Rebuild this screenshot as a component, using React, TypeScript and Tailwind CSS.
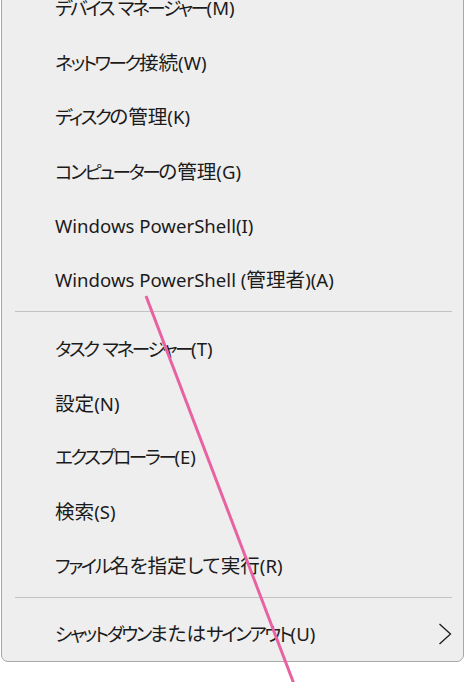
import React from 'react';

const groupA = [
  'デバイス マネージャー(M)',
  'ネットワーク接続(W)',
  'ディスクの管理(K)',
  'コンピューターの管理(G)',
  'Windows PowerShell(I)',
  'Windows PowerShell (管理者)(A)',
];

const groupB = [
  'タスク マネージャー(T)',
  '設定(N)',
  'エクスプローラー(E)',
  '検索(S)',
  'ファイル名を指定して実行(R)',
];

const font = { fontFamily: '"Noto Sans", "Noto Sans CJK JP", sans-serif' };

// katakana is set tighter and kanji a touch larger, like Yu Gothic UI
const Label: React.FC<{ text: string }> = ({ text }) => {
  const parts = text.split(/([\u30a0-\u30ff]+|[\x20-\x7e]+)/).filter(Boolean);
  return (
    <span className="[font-feature-settings:'palt']">
      {parts.map((p, i) => {
        if (/^[\u30a0-\u30ff]+$/.test(p)) {
          return <span key={i} className="tracking-[-2.4px]">{p}</span>;
        }
        if (/^[\x20-\x7e]+$/.test(p)) {
          return <span key={i}>{p}</span>;
        }
        return <span key={i} className="text-[19.6px]">{p}</span>;
      })}
    </span>
  );
};

const App: React.FC = () => {
  return (
    <div className="relative w-[466px] h-[682px] overflow-hidden bg-white" style={font}>
      <div className="ml-[1px] w-[463px] -mt-[20px] bg-[#eeeeee] border border-[#a8a8a8] rounded-b-[7px] text-[18.6px] text-[#1b1b1b]">
        {groupA.map(label => (
          <div key={label} className="h-[54.4px] flex items-center pl-[53px]">
            <Label text={label} />
          </div>
        ))}

        <div className="mt-[4px] mb-[10px] ml-[13px] mr-[11px] h-px bg-[#c2c2c2]" />

        {groupB.map(label => (
          <div key={label} className="h-[54px] flex items-center pl-[53px]">
            <Label text={label} />
          </div>
        ))}

        <div className="mt-[5px] mb-[8px] ml-[13px] mr-[11px] h-px bg-[#c2c2c2]" />

        <div className="h-[55px] flex items-center justify-between pl-[53px] pr-[11px]">
          <Label text="シャットダウンまたはサインアウト(U)" />
          <svg width="14" height="22" viewBox="0 0 14 22" fill="none">
            <polyline points="1.5,1 12.5,11 1.5,21" stroke="#1b1b1b" strokeWidth="1.3" />
          </svg>
        </div>
      </div>

      {/* annotation line */}
      <svg className="absolute inset-0 pointer-events-none" width="466" height="682">
        <line x1="146" y1="296" x2="294" y2="684" stroke="#e862a2" strokeWidth="3" />
      </svg>
    </div>
  );
};

export default App;
